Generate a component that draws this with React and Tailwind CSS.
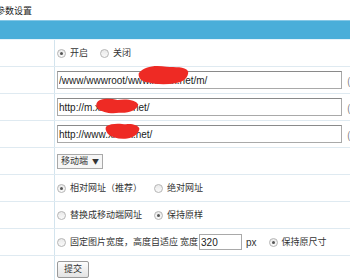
import React from 'react';

const Radio = ({ checked }) => (
    <span className="relative inline-block w-[9px] h-[9px] rounded-full border border-[#b5b5b5] bg-gradient-to-b from-[#e9e9e9] to-[#fafafa] shrink-0">
        {checked && <span className="absolute left-[2px] top-[2px] w-[3px] h-[3px] rounded-full bg-[#555]" />}
    </span>
);

const Choice = ({ checked, children }) => (
    <label className="flex items-center gap-[4px]">
        <Radio checked={checked} />
        <span>{children}</span>
    </label>
);

const Row = ({ children }) => (
    <div className="flex h-[27px] border-b border-[#dfeaf1]">
        <div className="w-[55px] shrink-0 border-r border-[#d3e4ee]" />
        <div className="flex-1 flex items-center pl-[2px] gap-[12px] whitespace-nowrap">{children}</div>
    </div>
);

// redaction marks drawn over the url fields
const Scribble = ({ className, d }) => (
    <svg className={`absolute ${className}`} viewBox="0 0 60 24" preserveAspectRatio="none">
        <path d={d} fill="#ee2a24" />
    </svg>
);

const UrlInput = ({ value }) => (
    <div className="flex items-center gap-[5px]">
        <input
            readOnly
            value={value}
            className="w-[285px] h-[18px] px-[1px] border border-[#a9a9a9] border-t-[#8a8a8a] bg-white text-[10px] text-[#222] outline-none"
            style={{ fontFamily: '"Liberation Sans", Arial, sans-serif' }}
        />
        <span className="text-[10px] text-[#777]">(</span>
    </div>
);

const App = () => {
    return (
        <div className="relative w-[350px] h-[280px] overflow-hidden bg-white text-[9px] text-[#333]" style={{ fontFamily: '"Noto Sans CJK SC", "Noto Sans", sans-serif' }}>
            <div className="h-[20px] flex items-center pt-[1px] -ml-[4px] text-[9px] text-[#222]">参数设置</div>
            <div className="h-[20px] bg-[#4aaed9] border-t border-[#86c8e6] border-b border-b-[#e6f3fa]" />

            <Row>
                <Choice checked>开启</Choice>
                <Choice>关闭</Choice>
            </Row>
            <Row><UrlInput value="/www/wwwroot/www.xxxxx.net/m/" /></Row>
            <Row><UrlInput value="http://m.xxxxxxx.net/" /></Row>
            <Row><UrlInput value="http://www.xxxxx.net/" /></Row>
            <Row>
                <div className="flex items-center h-[15px] px-[3px] gap-[4px] border border-[#a9a9a9] bg-[#f6f6f6]">
                    <span>移动端</span>
                    <span className="text-[7px]">▼</span>
                </div>
            </Row>
            <Row>
                <Choice checked>相对网址（推荐）</Choice>
                <Choice>绝对网址</Choice>
            </Row>
            <Row>
                <Choice>替换成移动端网址</Choice>
                <Choice checked>保持原样</Choice>
            </Row>
            <Row>
                <div className="flex items-center gap-[4px]">
                    <Choice>固定图片宽度，高度自适应 宽度</Choice>
                    <input
                        readOnly
                        value="320"
                        className="-ml-[3px] w-[43px] h-[16px] px-[1px] border border-[#a9a9a9] text-[10px] text-[#222] outline-none"
                        style={{ fontFamily: '"Liberation Sans", Arial, sans-serif' }}
                    />
                    <span className="text-[10px]" style={{ fontFamily: '"Liberation Sans", Arial, sans-serif' }}>px</span>
                </div>
                <Choice checked>保持原尺寸</Choice>
            </Row>
            <Row>
                <button className="h-[17px] px-[6px] border border-[#9a9a9a] rounded-[2px] bg-gradient-to-b from-[#fdfdfd] to-[#e3e3e3] text-[9px]">提交</button>
            </Row>

            <Scribble className="left-[137px] top-[64px] w-[52px] h-[22px]" d="M2 10 C8 2 22 1 34 3 C44 4 55 2 59 8 C60 14 54 20 44 21 C32 23 20 22 12 20 C6 19 1 16 2 10 Z" />
            <Scribble className="left-[96px] top-[97px] w-[43px] h-[18px]" d="M1 8 C4 2 18 1 30 4 C42 2 56 4 59 10 C58 17 46 22 32 21 C20 23 8 20 3 16 C0 13 0 10 1 8 Z" />
            <Scribble className="left-[105px] top-[122px] w-[35px] h-[18px]" d="M2 6 C10 1 26 2 36 3 C46 2 57 4 59 9 C58 15 50 21 38 22 C24 23 12 21 5 16 C1 12 0 8 2 6 Z" />
        </div>
    );
};

export default App;
